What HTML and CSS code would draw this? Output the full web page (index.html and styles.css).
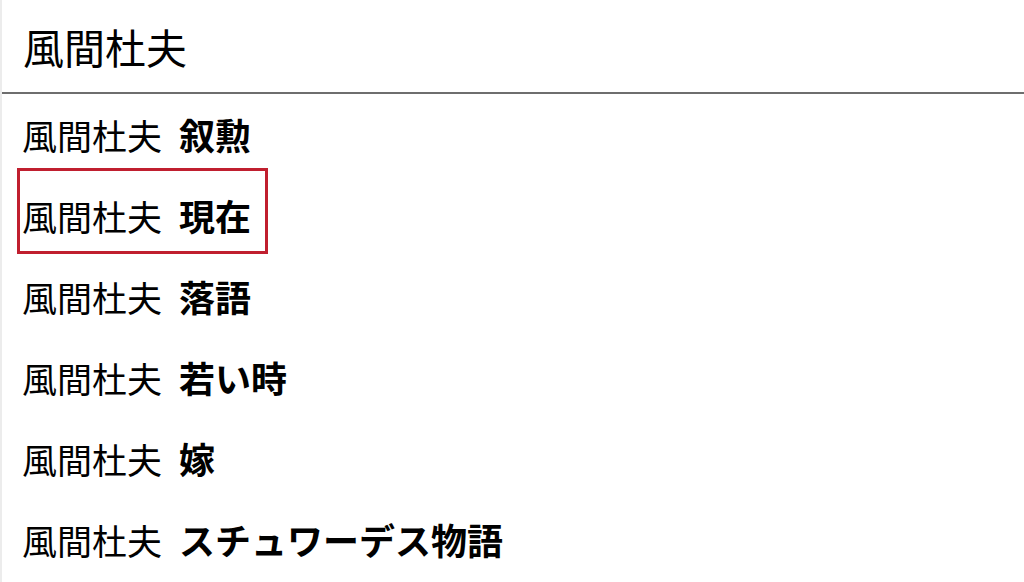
FILE: index.html
```html
<!DOCTYPE html>
<html lang="ja">
<head>
<meta charset="utf-8">
<link rel="stylesheet" href="styles.css">
</head>
<body>
<div class="page">
  <div class="search">風間杜夫</div>
  <ul class="list">
    <li class="item">風間杜夫<b>叙勲</b></li>
    <li class="item marked">風間杜夫<b>現在</b><span class="mark"></span></li>
    <li class="item">風間杜夫<b>落語</b></li>
    <li class="item">風間杜夫<b>若い時</b></li>
    <li class="item">風間杜夫<b>嫁</b></li>
    <li class="item">風間杜夫<b>スチュワーデス物語</b></li>
  </ul>
</div>
</body>
</html>
```

FILE: styles.css
```css
html, body {
  margin: 0;
  padding: 0;
  background: #fff;
}
body {
  width: 1024px;
  height: 582px;
  overflow: hidden;
  font-family: "Noto Sans CJK JP", "Noto Sans", sans-serif;
  color: #000;
}
.page {
  height: 582px;
  border-left: 2px solid #ececec;
  box-sizing: border-box;
}
.search {
  height: 94px;
  box-sizing: border-box;
  padding-left: 21px;
  font-size: 41px;
  line-height: 92px;
  border-bottom: 2px solid #6e6e6e;
}
.list {
  list-style: none;
  margin: 0;
  padding: 0;
}
.item {
  position: relative;
  height: 81px;
  line-height: 81px;
  padding-left: 20px;
  font-size: 35px;
}
.item b {
  font-weight: 700;
  font-size: 36px;
  margin-left: 17px;
}
.mark {
  position: absolute;
  left: 15px;
  top: -7px;
  width: 251px;
  height: 86px;
  box-sizing: border-box;
  border: 3px solid #c01f2f;
}
```
